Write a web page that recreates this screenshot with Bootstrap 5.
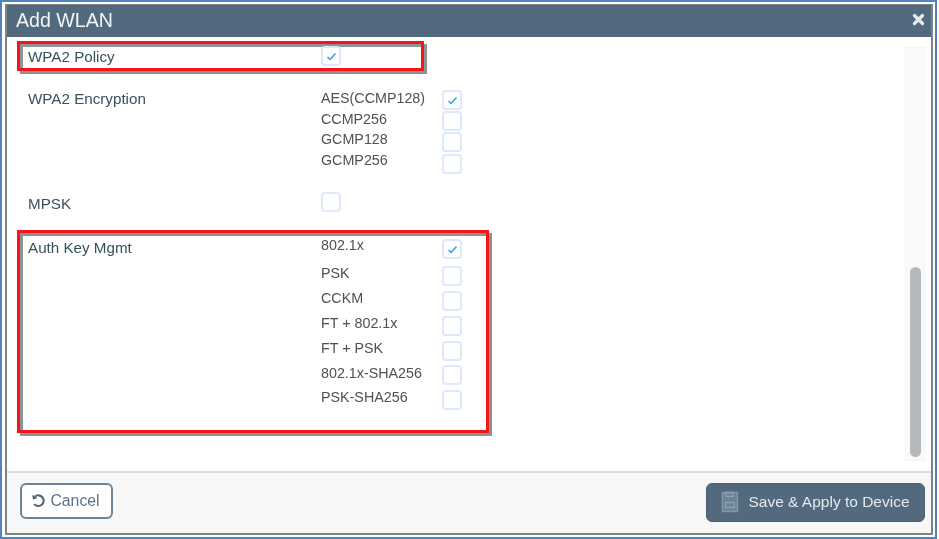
<!DOCTYPE html>
<html lang="en"><head><meta charset="utf-8"><title>Add WLAN</title>
<link href="https://cdn.jsdelivr.net/npm/bootstrap@5.3.0/dist/css/bootstrap.min.css" rel="stylesheet">
<style>
html,body{height:100%;margin:0;overflow:hidden;background:#fff}
body{font-family:"Liberation Sans",Arial,sans-serif;font-size:14px;color:#4c5257}
.shot-frame{width:937px;height:539px;border:2px solid #4f83c3;padding:2px 2px 2px 3px;background:#fff;filter:blur(.45px)}
.wlan-win{height:100%;border-radius:0;border:2px solid #7d8489;border-top-width:1px;box-shadow:none}
.wlan-head{height:32px;background:#52697e;color:#f2f5f7;padding:0 6px 0 9px;border:0;border-radius:0}
.wlan-head h1{font-size:19.6px;line-height:1;font-weight:400;margin:0}
.wlan-x{width:13px;height:13px;display:block;margin-bottom:4px}
.wlan-body{position:relative;padding:0;overflow:hidden;flex:1 1 auto}
.flow-col{padding:4px 0 0 10px}
.red-box{border:3px solid #f5141a;box-shadow:3px 3px 0 #8d9395,inset 3px 3px 0 #8d9395;display:flex;align-items:flex-start}
.box-a{width:407px;height:30px}
.box-b{width:472px;height:203px}
.lab{color:#36535c;width:301px;padding-left:8px;flex:none;font-size:15.2px;line-height:21px}
.opt-list{list-style:none;margin:0;padding:0;width:121px;flex:none;font-size:14.3px}
.tick{width:20px;height:20px;border:2px solid #dde9fb;border-radius:4px;background:#fff;display:flex;align-items:center;justify-content:center;flex:none}
.tick svg{width:11px;height:9px}
.tick-col{display:flex;flex-direction:column;flex:none}
.row-a{padding-top:2px}
.row-a .tick{margin-top:0}
.plain-row{display:flex;align-items:flex-start;padding-left:3px}
.enc-row{margin-top:17px;height:87px}
.enc-row .opt-list li{height:20.7px;line-height:20px}
.enc-row .tick-col{margin-top:2px;gap:1.2px}
.mpsk-row{margin-top:8px;height:47px}
.mpsk-row .lab{padding-top:10px}
.mpsk-row .tick{margin-top:9px}
.box-b .lab{padding-top:4px}
.box-b .opt-list{padding-top:2px}
.box-b .opt-list li{height:24.9px;line-height:20px}
.box-b .opt-list li:first-child{height:28px}
.box-b .tick-col{margin-top:6px;gap:4.9px}
.box-b .tick-col .tick:first-child{margin-bottom:2px}
.track{position:absolute;right:6px;top:10px;width:20px;height:414px;background:#fafafa;border:1px solid #f4f4f4}
.thumb{position:absolute;left:3.5px;right:3.5px;bottom:3px;height:190px;background:#b5b9bc;border-radius:6px}
.wlan-foot{height:62px;flex:none;background:#f7f7f7;border-top:2px solid #dcdcdc;padding:0 6px 0 13px;border-radius:0;flex-wrap:nowrap}
.btn-cancel{width:93px;height:36px;border:2px solid #6d8499;border-radius:6px;background:#fff;color:#5a7288;font-size:15.8px;padding:0 2px 0 0;display:flex;align-items:center;justify-content:center;gap:3px;margin:-4px 0 0}
.btn-save{width:219px;height:39px;background:#52697e;border:1px solid #4a6074;border-radius:6px;color:#e3e9ee;font-size:15.5px;padding:0;display:flex;align-items:center;justify-content:center;gap:9px;margin:-2px 0 0}
.btn-save:hover{background:#52697e;color:#e3e9ee}
</style></head>
<body>
<div class="shot-frame">
<div class="modal-content wlan-win d-flex flex-column">
  <div class="modal-header wlan-head d-flex justify-content-between align-items-center">
    <h1>Add WLAN</h1>
    <svg class="wlan-x" viewBox="0 0 13 13"><path d="M2.5 2.5l8 8M10.5 2.5l-8 8" stroke="#e4e9ed" stroke-width="3.4" stroke-linecap="round"/></svg>
  </div>
  <div class="modal-body wlan-body">
    <div class="flow-col">
      <div class="red-box box-a row-a">
        <div class="lab">WPA2 Policy</div>
        <div class="tick"><svg viewBox="0 0 11 9"><path d="M1.5 5l2.5 2.5L9.5 1.5" fill="none" stroke="#2f9fe0" stroke-width="1.5"/></svg></div>
      </div>
      <div class="plain-row enc-row">
        <div class="lab">WPA2 Encryption</div>
        <ul class="opt-list"><li>AES(CCMP128)</li><li>CCMP256</li><li>GCMP128</li><li>GCMP256</li></ul>
        <div class="tick-col">
          <div class="tick"><svg viewBox="0 0 11 9"><path d="M1.5 5l2.5 2.5L9.5 1.5" fill="none" stroke="#2f9fe0" stroke-width="1.5"/></svg></div>
          <div class="tick"></div><div class="tick"></div><div class="tick"></div>
        </div>
      </div>
      <div class="plain-row mpsk-row">
        <div class="lab">MPSK</div>
        <div class="tick"></div>
      </div>
      <div class="red-box box-b">
        <div class="lab">Auth Key Mgmt</div>
        <ul class="opt-list"><li>802.1x</li><li>PSK</li><li>CCKM</li><li>FT + 802.1x</li><li>FT + PSK</li><li>802.1x-SHA256</li><li>PSK-SHA256</li></ul>
        <div class="tick-col">
          <div class="tick"><svg viewBox="0 0 11 9"><path d="M1.5 5l2.5 2.5L9.5 1.5" fill="none" stroke="#2f9fe0" stroke-width="1.5"/></svg></div>
          <div class="tick"></div><div class="tick"></div><div class="tick"></div><div class="tick"></div><div class="tick"></div><div class="tick"></div>
        </div>
      </div>
    </div>
    <div class="track"><div class="thumb"></div></div>
  </div>
  <div class="modal-footer wlan-foot d-flex justify-content-between align-items-center">
    <button type="button" class="btn btn-cancel"><svg width="16" height="16" viewBox="0 0 15 15"><path d="M3.6 3.4A5 5 0 1 1 3 10.4" fill="none" stroke="#4d6478" stroke-width="1.9"/><path d="M1.2 1.6l.6 4.4 4.2-1z" fill="#4d6478"/></svg>Cancel</button>
    <button type="button" class="btn btn-save"><svg width="18" height="22" viewBox="0 0 18 22"><path d="M1.5 1.5h15v19h-15z" fill="#6c8194" stroke="#8398aa" stroke-width="1.4"/><path d="M4.5 11.5h9v5h-9zM5 1.5h7v4H5z" fill="none" stroke="#8ea2b3" stroke-width="1.3"/></svg>Save &amp; Apply to Device</button>
  </div>
</div>
</div>
<script src="https://cdn.jsdelivr.net/npm/bootstrap@5.3.0/dist/js/bootstrap.bundle.min.js"></script>
</body></html>
